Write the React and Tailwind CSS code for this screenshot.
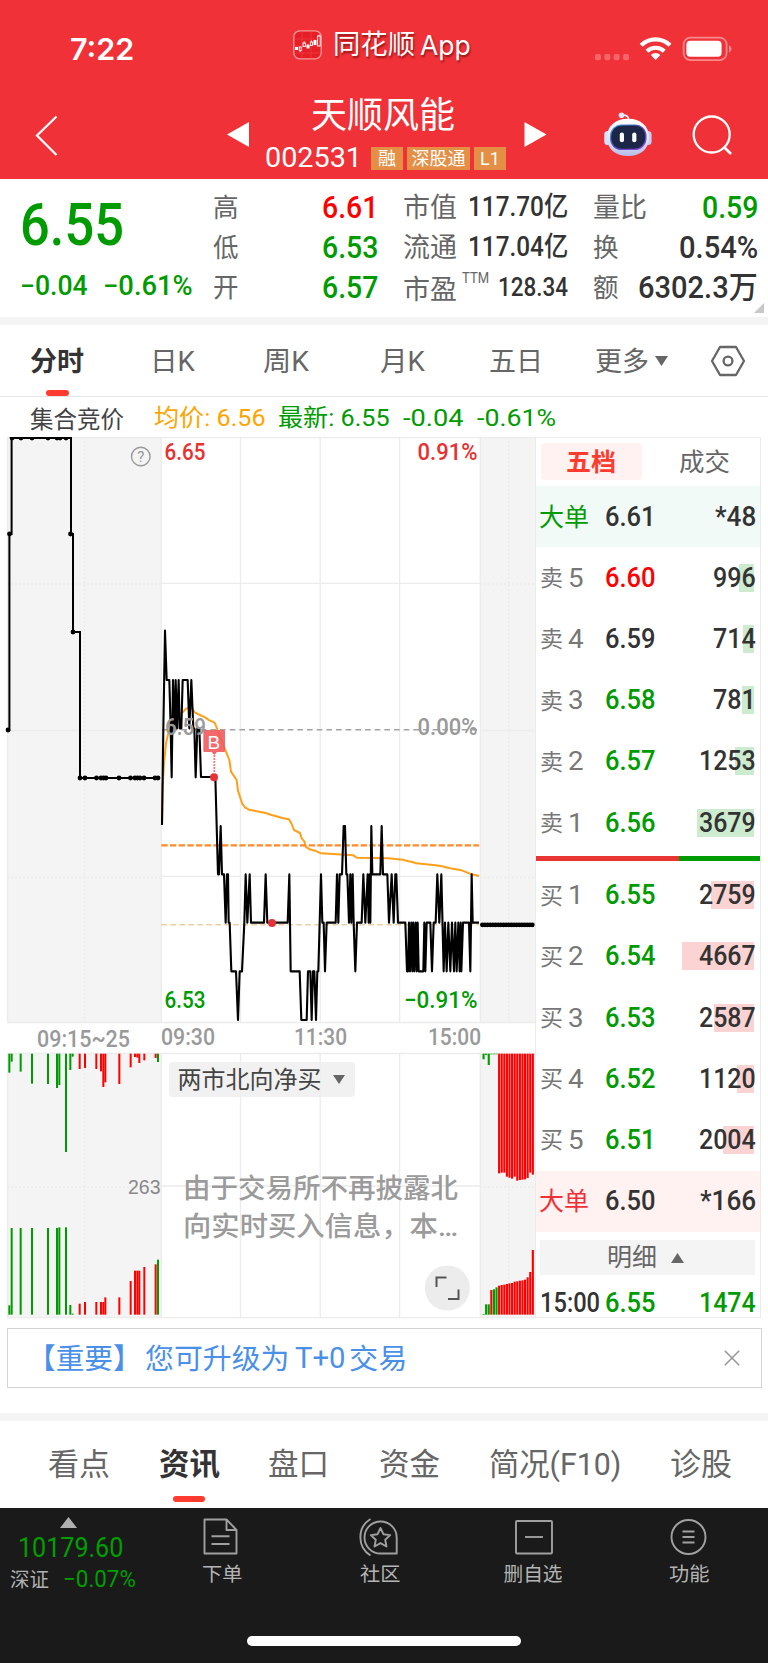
import React, { useLayoutEffect, useRef } from "react";

// Single-line text condensed or widened to fill the width of its box.
function Fit({ className = "", children }) {
  const box = useRef(null);
  const ink = useRef(null);
  useLayoutEffect(() => {
    const s = box.current.clientWidth / ink.current.offsetWidth;
    ink.current.style.transform = `scaleX(${s})`;
  }, [children]);
  return (
    <span ref={box} className={"block shrink-0 whitespace-nowrap leading-none " + className}>
      <span ref={ink} className="inline-block origin-left">{children}</span>
    </span>
  );
}

function StatusBar() {
  return (
    <div className="flex h-[89px] pt-[24px] text-white">
      <Fit className="ml-[70px] mt-[10px] w-[64px] font-['Inter'] text-[30px] font-semibold">7:22</Fit>
      <svg className="ml-[159px] mt-[6px] h-[30px] w-[29px] shrink-0" viewBox="0 0 29 30">
        <rect x="0.8" y="0.8" width="27.4" height="28" rx="6" fill="#e61f26" stroke="#f79a9c" strokeWidth="1.3" />
        <path d="M1 9h27M1 16h27M1 23h27M9 1v28M18 1v28" stroke="#f0484c" strokeWidth="0.5" />
        <path d="M2 17h3v3H2zM13.5 14.5h3v4h-3zM20.5 10h3v5h-3z" fill="#fff" />
        <g fill="none" stroke="#fff" strokeWidth="0.9">
          <rect x="6.2" y="17" width="2" height="3.4" /><rect x="10" y="13" width="2.4" height="3.4" />
          <rect x="17.4" y="12" width="2" height="3.4" /><path d="M11.2 11.2v2M7.2 20.4v1.6M18.4 10.5v1.5M26 4.5v2" /><rect x="24.6" y="6" width="2.6" height="10" />
        </g>
      </svg>
      <div className="ml-[11px] mt-[8px] flex [text-shadow:1px_2px_2px_rgba(90,0,0,0.6)]">
        <Fit className="w-[82px] text-[27px]">同花顺</Fit>
        <Fit className="ml-[5px] w-[51px] font-['Inter'] text-[27px]">App</Fit>
      </div>
      <svg className="ml-[123px] mt-[10px] h-[30px] w-[140px] shrink-0" viewBox="594 34 140 30">
        <g fill="#f5666b">
          <rect x="595" y="54" width="6" height="6.3" rx="2" /><rect x="604.3" y="54" width="6" height="6.3" rx="2" />
          <rect x="613.6" y="54" width="6" height="6.3" rx="2" /><rect x="623" y="54" width="6" height="6.3" rx="2" />
        </g>
        <g fill="none" stroke="#fff" strokeWidth="4.2">
          <path d="M641.2 45.2a20.5 20.5 0 0 1 28.8 0" />
          <path d="M647 51.2a12.4 12.4 0 0 1 17.2 0" />
        </g>
        <path d="M655.6 60l-4.8-4.9a6.8 6.8 0 0 1 9.6 0z" fill="#fff" />
        <rect x="683.6" y="37.6" width="43" height="22.6" rx="7" fill="none" stroke="#f8898d" strokeWidth="1.8" />
        <rect x="686.4" y="40.8" width="35.2" height="16" rx="4" fill="#fff" />
        <path d="M729 45.2q2.6 1.2 2.6 3.7t-2.6 3.7z" fill="#f8898d" />
      </svg>
    </div>
  );
}

function Badge({ w, children }) {
  return <span className={"flex h-[23px] items-center justify-center bg-[#e48f45] text-[18px] leading-none " + w}>{children}</span>;
}

function TitleBar() {
  return (
    <div className="flex h-[90px] text-white">
      <svg className="ml-[34px] mt-[24px] h-[44px] w-[26px] shrink-0" viewBox="0 0 26 44">
        <path d="M22.5 3.5L3 22.5l19.5 19.5" fill="none" stroke="#fff" strokeWidth="2.2" />
      </svg>
      <svg className="ml-[166px] mt-[33px] h-[25px] w-[24px] shrink-0" viewBox="0 0 24 25"><path d="M23 0v25L1 12.5z" fill="#fff" /></svg>
      <div className="ml-[15px] w-[244px] shrink-0">
        <Fit className="ml-[46px] mt-[9px] w-[144px] text-[36px]">天顺风能</Fit>
        <div className="mt-[11px] flex items-center">
          <Fit className="w-[97px] text-[27px]">002531</Fit>
          <div className="ml-[9px] flex gap-[4px]">
            <Badge w="w-[32px]">融</Badge>
            <Badge w="w-[63px]">深股通</Badge>
            <Badge w="w-[32px]">L1</Badge>
          </div>
        </div>
      </div>
      <svg className="ml-[15px] mt-[33px] h-[25px] w-[24px] shrink-0" viewBox="0 0 24 25"><path d="M0.5 0v25L22.5 12.5z" fill="#fff" /></svg>
      <svg className="ml-[55px] mt-[22px] h-[48px] w-[50px] shrink-0" viewBox="603 111 50 48">
        <defs>
          <linearGradient id="shell" x1="0" y1="0" x2="0" y2="1"><stop offset="0" stopColor="#ffffff" /><stop offset="0.6" stopColor="#dfe2f7" /><stop offset="1" stopColor="#b6bbe8" /></linearGradient>
          <linearGradient id="visor" x1="0" y1="0" x2="1" y2="1"><stop offset="0" stopColor="#4fb4e8" /><stop offset="0.5" stopColor="#5046b8" /><stop offset="1" stopColor="#9a4ae0" /></linearGradient>
        </defs>
        <path d="M621.5 115.5q7-1.5 7.5 5" fill="none" stroke="#e9ecfa" strokeWidth="1.8" />
        <circle cx="621.5" cy="115.3" r="2.8" fill="#e3e7f8" />
        <rect x="604.2" y="131" width="7" height="14" rx="3.5" fill="#dadff5" />
        <rect x="644.6" y="131" width="7" height="14" rx="3.5" fill="#c9cef0" />
        <path d="M628 118.8c13 0 21 7.5 21 18.7s-8 18.5-21 18.5-21-7.3-21-18.5 8-18.7 21-18.7z" fill="url(#shell)" />
        <rect x="610" y="124.5" width="36.5" height="25.5" rx="11.5" fill="url(#visor)" />
        <rect x="611.2" y="125.5" width="34" height="23.3" rx="10.5" fill="#1c2748" />
        <rect x="619.8" y="132.5" width="4.2" height="9.8" rx="2.1" fill="#fff" /><rect x="632.2" y="132.5" width="4.2" height="9.8" rx="2.1" fill="#fff" />
      </svg>
      <svg className="ml-[38px] mt-[24px] h-[44px] w-[44px] shrink-0" viewBox="691 113 44 44">
        <circle cx="711.7" cy="134.5" r="18" fill="none" stroke="#fff" strokeWidth="2.3" />
        <path d="M723.5 146.5l7.5 7.5" stroke="#fff" strokeWidth="2.6" />
      </svg>
    </div>
  );
}

function Stat({ label, children }) {
  return (
    <div className="flex h-10 items-center justify-between">
      <span className="flex items-center pt-[3px] text-[#666]">{label}</span>
      {children}
    </div>
  );
}

const L1 = "w-[26px] text-[26.5px]";
const L2 = "w-[54px] text-[27px]";

function Quote() {
  return (
    <div className="relative flex h-[138px] bg-white pt-2 text-[#333]">
      <div className="w-[192px] pl-[20px] text-[#009b00]">
        <Fit className="mt-[8px] w-[104px] text-[59px] font-medium">6.55</Fit>
        <div className="mt-[19px] flex">
          <Fit className="w-[68px] text-[27px] font-medium">−0.04</Fit>
          <Fit className="ml-[15px] w-[90px] text-[27px] font-medium">−0.61%</Fit>
        </div>
      </div>
      <div className="ml-[21px] w-[165px]">
        <Stat label={<Fit className={L1}>高</Fit>}><Fit className="w-[56px] text-[31px] font-medium text-[#ff0000]">6.61</Fit></Stat>
        <Stat label={<Fit className={L1}>低</Fit>}><Fit className="w-[56px] text-[31px] font-medium text-[#009b00]">6.53</Fit></Stat>
        <Stat label={<Fit className={L1}>开</Fit>}><Fit className="w-[56px] text-[31px] font-medium text-[#009b00]">6.57</Fit></Stat>
      </div>
      <div className="ml-[25px] w-[165px]">
        <Stat label={<Fit className={L2}>市值</Fit>}><Fit className="w-[100px] text-[27px] font-medium">117.70亿</Fit></Stat>
        <Stat label={<Fit className={L2}>流通</Fit>}><Fit className="w-[100px] text-[27px] font-medium">117.04亿</Fit></Stat>
        <Stat label={<><Fit className={L2 + " pt-[3px]"}>市盈</Fit><Fit className="mb-[22px] ml-[5px] w-[27px] text-[14px]">TTM</Fit></>}>
          <Fit className="w-[70px] text-[26px] font-medium">128.34</Fit>
        </Stat>
      </div>
      <div className="ml-[25px] w-[165px]">
        <Stat label={<Fit className={L2}>量比</Fit>}><Fit className="w-[56px] text-[31px] font-medium text-[#009b00]">0.59</Fit></Stat>
        <Stat label={<Fit className={L1}>换</Fit>}><Fit className="w-[79px] text-[31px] font-medium">0.54%</Fit></Stat>
        <Stat label={<Fit className={L1}>额</Fit>}><Fit className="w-[120px] text-[31px] font-medium">6302.3万</Fit></Stat>
      </div>
      <svg className="absolute bottom-[4px] right-[4px] h-[10px] w-[10px]" viewBox="0 0 10 10"><path d="M10 0v10H0z" fill="#c8c8c8" /></svg>
    </div>
  );
}

function PeriodTabs() {
  return (
    <div className="h-[72px] border-b border-[#e6e6e6] bg-white text-[27px] text-[#666]">
      <div className="flex h-[65px] items-center pt-[6px]">
        <Fit className="ml-[30px] w-[54px] pt-[4px] font-bold text-[#333]">分时</Fit>
        <Fit className="ml-[66px] w-[45px] pt-[4px]">日K</Fit>
        <Fit className="ml-[68px] w-[46px] pt-[4px]">周K</Fit>
        <Fit className="ml-[71px] w-[45px] pt-[4px]">月K</Fit>
        <Fit className="ml-[64px] w-[54px] pt-[4px]">五日</Fit>
        <Fit className="ml-[52px] w-[54px] pt-[4px]">更多</Fit>
        <svg className="ml-[6px] h-[10px] w-[13px] shrink-0" viewBox="0 0 13 10"><path d="M0 0h13L6.5 10z" fill="#666" /></svg>
        <svg className="ml-[42px] h-[34px] w-[36px] shrink-0" viewBox="0 0 36 34">
          <path d="M10 3h16l8 14-8 14H10L2 17z" fill="none" stroke="#666" strokeWidth="2.3" strokeLinejoin="round" />
          <circle cx="18" cy="17" r="4.4" fill="none" stroke="#666" strokeWidth="2.3" />
        </svg>
      </div>
      <div className="ml-[46px] h-[6px] w-[23px] rounded-[3px] bg-[#ff3b30]" />
    </div>
  );
}

function InfoLine() {
  return (
    <div className="flex h-[40px] items-center bg-white pt-[1px] text-[24px]">
      <Fit className="ml-[30px] mt-[4px] w-[94px] text-[#444]">集合竞价</Fit>
      <Fit className="ml-[30px] w-[112px] text-[#ffa500]">均价: 6.56</Fit>
      <Fit className="ml-[12px] w-[112px] text-[#009b00]">最新: 6.55</Fit>
      <Fit className="ml-[13px] w-[60px] text-[#009b00]">-0.04</Fit>
      <Fit className="ml-[14px] w-[79px] text-[#009b00]">-0.61%</Fit>
    </div>
  );
}

const AUCTION_DOTS = [
  [8, 730], [9.5, 534], [12, 438], [21, 438], [32, 438], [48, 438], [57, 438], [60, 438], [66, 438], [70.5, 534], [73, 632],
  [80, 778], [85, 778], [96.5, 778], [101, 778], [103.5, 778], [106, 778], [119, 778], [130.5, 778], [135, 778], [137.5, 778], [140, 778], [144, 778], [155, 778], [158, 778],
];

const PRICE =
  "36,675 40,385 45,92 50,240 58,240 62,385 65,532 69,240 74,385 77,240 81,385 86,240 89,385 94,385 98,240 113,240 118,385 124,240 130,385 133,385 137,532 142,385 148,385 153,531 196,531 204,823 207,823 212,678 216,823 222,823 227,968 231,823 234,823 236,968 239,968 244,1114 258,1114 264,1260 269,1114 276,1114 283,968 287,823 292,968 299,823 303,968 342,968 347,823 352,968 413,968 418,823 422,1114 449,1114 454,1260 470,1260 474,1114 481,1114 485,1260 489,1114 493,1114 498,1260 502,1114 505,1114 513,823 517,968 521,968 525,1114 530,968 557,968 561,823 565,968 569,823 576,823 581,678 585,678 589,823 592,823 597,968 601,823 604,968 608,823 611,968 616,1114 621,968 635,968 640,823 646,968 653,823 656,968 659,823 661,968 664,678 667,823 691,823 695,678 699,823 712,823 717,968 725,823 731,968 736,823 739,823 744,968 766,968 771,1114 774,1114 777,968 780,1114 784,968 787,1114 790,968 793,1114 797,968 800,1114 803,968 806,1114 820,1114 823,968 826,1114 830,968 841,968 846,1114 851,968 857,968 862,823 868,968 874,823 881,1114 885,968 890,1114 895,968 901,1114 906,968 912,1114 916,968 920,1114 925,968 929,1114 932,968 934,1114 939,968 957,968 961,1114 965,823 968,968 987,968";
const AVERAGE =
  "36,675 38,560 42,490 48,430 55,400 68,370 80,350 90,342 100,335 108,326 118,323 127,326 134,337 150,345 165,352 178,361 193,367 199,380 206,400 222,440 238,480 243,515 260,540 264,572 272,597 277,612 285,622 297,629 347,639 365,645 400,655 417,658 425,672 432,690 450,699 455,715 463,724 467,740 479,748 500,754 513,760 610,766 620,773 715,775 758,779 775,784 788,786 798,790 850,795 873,798 900,805 935,811 960,821 987,828";

const G = "#009b00";
const R = "#ff0000";
// [x, upper bar end, lower bar top, colour]
const AUCTION_BARS = [
  [28, 158, 856, G], [35, 125, 624, G], [62, 155, 624, G], [96, 191, 624, G], [144, 192, 624, G], [171, 204, 624, G], [178, 195, 622, G], [198, 396, 622, G],
  [211, 150, 855, G], [218, 110, 881, G], [239, 147, 851, R], [255, 144, 846, R], [289, 147, 846, R], [303, 154, 846, R], [310, 201, 846, R], [316, 187, 832, R],
  [358, 192, 832, R], [392, 142, 783, R], [405, 111, 752, R], [412, 113, 752, R], [418, 129, 752, R], [433, 121, 741, R], [467, 114, 733, R], [474, 126, 719, G],
];
const CLOSE_UP = [118, 105, 135, 103, 103, 103, 460, 458, 458, 470, 473, 476, 470, 482, 480, 479, 478, 474, 458, 464];
const CLOSE_LOW = [882, 853, 853, 810, 808, 802, 797, 795, 794, 792, 790, 789, 785, 784, 782, 781, 779, 772, 756, 690];

function ChartText({ x, y, w, size = 23.5, fill, end, children }) {
  return (
    <text x={end ? x - w : x} y={y} textLength={w} lengthAdjust="spacingAndGlyphs" fontSize={size} fontWeight="500" fill={fill}>{children}</text>
  );
}

function Chart() {
  return (
    <div className="relative h-[885px] w-[535px] shrink-0">
      <svg className="block h-[885px] w-[535px]" viewBox="0 437 535 885">
        <g fill="#f4f4f4">
          <rect x="7" y="437" width="154" height="585.5" /><rect x="480" y="437" width="55" height="585.5" />
          <rect x="7" y="1053" width="154" height="265" /><rect x="480" y="1053" width="55" height="265" />
        </g>
        <g stroke="#ececec" strokeWidth="1.3" fill="none">
          <path d="M7 437.6H535M7 1022.5H535M7 1053.5H535M7 1317.7H535M7.5 437V1022M7.5 1053V1317" />
          <path d="M161.3 437V1022M240.5 437V1022M320.2 437V1022M399.6 437V1022M480.3 437V1022" />
          <path d="M161.3 1053V1317M240.5 1053V1317M320.2 1053V1317M399.6 1053V1317M480.3 1053V1317" />
          <path d="M161 583.3H480M161 876.3H480M161 1186H480M7 730.5H161M480 730.5H535" />
          <path d="M7 584H161M7 877.5H161M7 1187H161M84.5 437V1022M84.5 1053V1317M508.7 437V1022M508.7 1053V1317M480 584H535M480 877.5H535M480 1187H535" strokeDasharray="2 2" stroke="#ececec" />
        </g>

        <path d="M8 730H9.4V534H11.6V438H71V534H73V632H80V778H159" fill="none" stroke="#000" strokeWidth="2" />
        {AUCTION_DOTS.map(([x, y], i) => <circle key={i} cx={x} cy={y} r="2.4" fill="#000" />)}

        <g transform="translate(150 600) scale(0.33333)" fill="none" strokeLinejoin="round">
          <path d="M34 974H987" stroke="#ecd0a4" strokeWidth="4.5" strokeDasharray="17 10" />
          <polyline points={AVERAGE} stroke="#ff9f1a" strokeWidth="6" />
          <path d="M36 389H988" stroke="#a3a3a3" strokeWidth="4.5" strokeDasharray="17 12" />
          <path d="M34 736H987" stroke="#ff8a2b" strokeWidth="6.5" strokeDasharray="19 7" />
          <polyline points={PRICE} stroke="#000" strokeWidth="6.3" />
          <path d="M193 457V515" stroke="#ee5258" strokeWidth="5.5" strokeDasharray="4 5" />
          <circle cx="192" cy="532" r="12" fill="#e53238" /><circle cx="366" cy="969" r="12" fill="#e53238" />
          <path d="M163 390h59q3 0 3 3v60q0 3-3 3h-21l-8 9-8-9h-22q-3 0-3-3v-60q0-3 3-3z" fill="#ef5a5e" fillOpacity="0.9" />
          <path d="M993 974.5H1152" stroke="#000" strokeWidth="11" />
          <path d="M997 974.5H1152" stroke="#000" strokeWidth="14" strokeLinecap="round" strokeDasharray="0.1 7.8" />
        </g>
        <text x="213.8" y="748.5" textAnchor="middle" fontFamily="Liberation Sans" fontSize="19" fill="#fff">B</text>

        <circle cx="140.8" cy="456.5" r="9.3" fill="none" stroke="#999" strokeWidth="1.4" />
        <text x="140.8" y="462" textAnchor="middle" fontSize="15" fill="#999">?</text>

        <ChartText x={164.5} y={459.5} w={41} fill="#e93030">6.65</ChartText>
        <ChartText x={477.5} y={459.5} w={60} fill="#e93030" end>0.91%</ChartText>
        <ChartText x={165} y={734.5} w={41} fill="#999">6.59</ChartText>
        <ChartText x={477.5} y={734.5} w={60} fill="#999" end>0.00%</ChartText>
        <ChartText x={164.5} y={1007.5} w={41} fill={G}>6.53</ChartText>
        <ChartText x={477.5} y={1007.5} w={73.5} fill={G} end>−0.91%</ChartText>

        <ChartText x={37} y={1047} w={93} fill="#999">09:15~25</ChartText>
        <ChartText x={161} y={1045} w={54} fill="#999">09:30</ChartText>
        <ChartText x={294} y={1045} w={53} fill="#999">11:30</ChartText>
        <ChartText x={481} y={1045} w={53} fill="#999" end>15:00</ChartText>

        <g transform="translate(0 1020) scale(0.33333)">
          {AUCTION_BARS.map(([x, a, b, c]) => (
            <React.Fragment key={x}><rect x={x - 3} y="101" width="6" height={a - 101} fill={c} /><rect x={x - 3} y={b} width="6" height={884 - b} fill={c} /></React.Fragment>
          ))}
          {CLOSE_UP.map((a, i) => (
            <rect key={i} x={1447.5 + i * 7.78} y="101" width="6.4" height={a - 101} fill={i < 6 ? G : R} />
          ))}
          {CLOSE_LOW.map((b, i) => (
            <rect key={i} x={1447.5 + i * 7.78} y={b} width="6.4" height={884 - b} fill={i < 6 && i !== 3 ? G : R} />
          ))}
        </g>
        <text x="160.5" y="1193.5" textAnchor="end" fontFamily="Liberation Sans" fontSize="19.5" fill="#888">263</text>
      </svg>

      <div className="absolute left-[168.5px] top-[625px] flex h-[35px] w-[186px] items-center rounded-[4px] bg-[#eeeeee]/85 text-[#444]">
        <Fit className="ml-[9px] w-[144px] pt-[1px] text-[24px]">两市北向净买</Fit>
        <svg className="ml-[11px] h-[9px] w-[12px]" viewBox="0 0 12 9"><path d="M0 0h12L6 9z" fill="#666" /></svg>
      </div>
      <div className="absolute left-[183px] top-[733px] flex flex-col text-[27.5px] font-medium text-[#9b9b9b]">
        <Fit className="flex h-[38px] w-[275px] items-center">由于交易所不再披露北</Fit>
        <Fit className="flex h-[38px] w-[275px] items-center">向实时买入信息，本…</Fit>
      </div>
      <svg className="absolute left-[424px] top-[828px] h-[46px] w-[46px]" viewBox="0 0 46 46">
        <circle cx="23.3" cy="23" r="22.6" fill="#ececec" />
        <path d="M12.5 22V12.5H22.5M34.5 24.5V34H24" fill="none" stroke="#555" strokeWidth="2" />
      </svg>
    </div>
  );
}

const SELLS = [
  ["5", "6.60", "996", "text-[#ff0000]", "w-[15px]"],
  ["4", "6.59", "714", "text-[#333]", "w-[11px]"],
  ["3", "6.58", "781", "text-[#009b00]", "w-[12px]"],
  ["2", "6.57", "1253", "text-[#009b00]", "w-[19px]"],
  ["1", "6.56", "3679", "text-[#009b00]", "w-[57px]"],
];
const BUYS = [
  ["1", "6.55", "2759", "text-[#009b00]", "w-[43px]"],
  ["2", "6.54", "4667", "text-[#009b00]", "w-[72px]"],
  ["3", "6.53", "2587", "text-[#009b00]", "w-[40px]"],
  ["4", "6.52", "1120", "text-[#009b00]", "w-[17px]"],
  ["5", "6.51", "2004", "text-[#009b00]", "w-[31px]"],
];

function Level({ side, row, bar }) {
  const [n, price, qty, tone, w] = row;
  return (
    <div className="flex h-[61.2px] shrink-0 items-center">
      <Fit className="ml-[4px] w-[23px] pt-[2px] text-[23px] text-[#777]">{side}</Fit>
      <Fit className="ml-[5px] w-[16px] text-[26px] text-[#777]">{n}</Fit>
      <Fit className={"ml-[21px] w-[51px] text-[28px] font-medium " + tone}>{price}</Fit>
      <div className="relative ml-auto mr-[4px] flex h-[28px] items-center">
        <span className={"absolute right-[2.5px] top-0 h-[28px] " + w + " " + bar} />
        <Fit className={"relative text-[28px] font-medium text-[#333] " + (qty.length === 3 ? "w-[43px]" : "w-[57px]")}>{qty}</Fit>
      </div>
    </div>
  );
}

function BigOrder({ tone, bg, price, qty, w }) {
  return (
    <div className={"flex h-[61.2px] shrink-0 items-center " + bg}>
      <Fit className={"ml-[3px] w-[50px] pt-[1px] text-[25px] " + tone}>大单</Fit>
      <Fit className="ml-[16px] w-[51px] text-[28px] font-medium text-[#333]">{price}</Fit>
      <Fit className={"ml-auto mr-[4px] text-[28px] font-medium text-[#333] " + w}>{qty}</Fit>
    </div>
  );
}

function OrderBook() {
  return (
    <div className="flex h-[881px] w-[226px] shrink-0 flex-col border border-[#ebebeb] bg-white">
      <div className="flex h-[48px] shrink-0 pt-[5px] text-[25px]">
        <div className="ml-[5px] flex h-[37px] w-[101px] items-center rounded-[4px] bg-[#fff2f1] pt-[2px] font-bold text-[#ff3b30]"><Fit className="ml-[25px] w-[50px]">五档</Fit></div>
        <div className="ml-[37px] flex h-[37px] items-center pt-[1px] text-[#666]"><Fit className="w-[51px]">成交</Fit></div>
      </div>
      <BigOrder tone="text-[#009b00]" bg="bg-[#f1faf6]" price="6.61" qty="*48" w="w-[41px]" />
      {SELLS.map((r) => <Level key={r[0]} side="卖" row={r} bar="bg-[#cdebcf]" />)}
      <div className="mb-[4px] mt-[3px] flex h-[4.5px] shrink-0"><div className="h-full w-[143px] bg-[#e93434]" /><div className="h-full flex-1 bg-[#009b00]" /></div>
      {BUYS.map((r) => <Level key={r[0]} side="买" row={r} bar="bg-[#fbd3d3]" />)}
      <BigOrder tone="text-[#f03038]" bg="bg-[#fff2f1]" price="6.50" qty="*166" w="w-[56px]" />
      <div className="ml-[4px] mt-[8px] flex h-[35px] w-[215px] shrink-0 items-center bg-[#f4f4f4] pt-[1px] text-[#666]">
        <Fit className="ml-[67px] w-[50px] text-[25px]">明细</Fit>
        <svg className="ml-[14px] h-[10px] w-[13px]" viewBox="0 0 13 10"><path d="M0 10h13L6.5 0z" fill="#666" /></svg>
      </div>
      <div className="mt-[14px] flex shrink-0 items-center">
        <Fit className="ml-[4px] w-[60px] text-[28px] font-medium text-[#333]">15:00</Fit>
        <Fit className="ml-[5px] w-[51px] text-[28px] font-medium text-[#009b00]">6.55</Fit>
        <Fit className="ml-auto mr-[4px] w-[57px] text-[28px] font-medium text-[#009b00]">1474</Fit>
      </div>
    </div>
  );
}

function Banner() {
  return (
    <div className="ml-[7px] mt-[6px] flex h-[60px] w-[755px] items-center border border-[#d4d4d4] text-[28.7px] text-[#4a90e8]">
      <Fit className="ml-[19px] w-[115px] pt-[2px]">【重要】</Fit>
      <Fit className="ml-[3px] w-[144px] pt-[2px]">您可升级为</Fit>
      <Fit className="ml-[6px] w-[51px]">T+0</Fit>
      <Fit className="ml-[3px] w-[58px] pt-[2px]">交易</Fit>
      <svg className="ml-[317px] h-[16px] w-[16px] shrink-0" viewBox="0 0 16 16"><path d="M0.8 0.8l14.4 14.4M15.2 0.8L0.8 15.2" stroke="#999" strokeWidth="1.6" /></svg>
    </div>
  );
}

function ContentTabs() {
  return (
    <div className="h-[87px] bg-white text-[31px] text-[#666]">
      <div className="flex h-[75px] items-center pt-[12px]">
        <Fit className="ml-[48px] w-[62px]">看点</Fit>
        <Fit className="ml-[49px] w-[61px] font-bold text-[#333]">资讯</Fit>
        <Fit className="ml-[48px] w-[61px]">盘口</Fit>
        <Fit className="ml-[50px] w-[61px]">资金</Fit>
        <Fit className="ml-[49px] w-[132px]">简况(F10)</Fit>
        <Fit className="ml-[49px] w-[62px]">诊股</Fit>
      </div>
      <div className="ml-[173px] h-[6px] w-[32px] rounded-[3px] bg-[#ff3b30]" />
    </div>
  );
}

function NavItem({ pos, w, label, children }) {
  return (
    <div className={"flex shrink-0 flex-col items-center " + pos}>
      <svg className="h-[40px] w-[42px]" viewBox="0 0 42 40" fill="none" stroke="#a0a0a0" strokeWidth="1.9" strokeLinejoin="round">{children}</svg>
      <Fit className={"mt-[8px] text-[19.7px] text-[#b4b4b4] " + w}>{label}</Fit>
    </div>
  );
}

function BottomNav() {
  return (
    <div className="flex h-[156px] flex-col bg-[#1a1a1a]">
      <div className="flex h-[128px]">
        <div className="w-[148px] shrink-0 text-[#009f00]">
          <svg className="ml-[60px] mt-[9px] h-[11px] w-[17px]" viewBox="0 0 17 11"><path d="M0 11h17L8.5 0z" fill="#b0b0b0" /></svg>
          <Fit className="ml-[18px] mt-[7px] w-[105px] text-[27px]">10179.60</Fit>
          <div className="mt-[6px] flex items-center">
            <Fit className="ml-[10px] mt-[1px] w-[39px] text-[20px] text-[#b0b0b0]">深证</Fit>
            <Fit className="ml-[14px] w-[73px] text-[23px]">−0.07%</Fit>
          </div>
        </div>
        <NavItem pos="ml-[48px] mt-[9px] w-[52px]" w="w-[40px]" label="下单">
          <path d="M3.500 2.500h22l10 10.500v23.500h-32zM25.500 2.500V13h10M10.500 19.200h18M10.500 27h18" />
        </NavItem>
        <NavItem pos="ml-[106px] mt-[9px] w-[52px]" w="w-[40px]" label="社区">
          <path d="M21.500 4.500a16 16 0 0 0 0 32h16.200v-16a16 16 0 0 0-16.200-16z" />
          <path d="M11.500 2a21.500 21.500 0 0 0 0 36.500" />
          <path d="M21.500 11l2.900 6.200 6.800.9-5 4.700 1.300 6.700-6-3.300-6 3.300 1.300-6.700-5-4.700 6.800-.9z" />
        </NavItem>
        <NavItem pos="ml-[95px] mt-[9px] w-[64px]" w="w-[59px]" label="删自选">
          <rect x="4" y="4" width="36" height="32.500" rx="1" /><path d="M13 20h18" />
        </NavItem>
        <NavItem pos="ml-[96px] mt-[9px] w-[56px]" w="w-[40px]" label="功能">
          <circle cx="20.500" cy="20" r="17" /><path d="M14.500 14.500h12M14.500 20h12M14.500 25.500h12" />
        </NavItem>
      </div>
      <div className="ml-[247px] h-[10px] w-[274px] rounded-full bg-white" />
    </div>
  );
}

export default function App() {
  return (
    <div className="h-[1663px] w-[768px] overflow-hidden bg-white font-['Roboto','Noto_Sans_CJK_SC',sans-serif]">
      <div className="h-[179px] bg-[#f03138]">
        <StatusBar />
        <TitleBar />
      </div>
      <Quote />
      <div className="h-[8px] bg-[#f4f4f4]" />
      <PeriodTabs />
      <InfoLine />
      <div className="flex h-[885px]">
        <Chart />
        <OrderBook />
      </div>
      <Banner />
      <div className="mt-[25px] h-[8px] bg-[#f4f4f4]" />
      <ContentTabs />
      <BottomNav />
    </div>
  );
}
